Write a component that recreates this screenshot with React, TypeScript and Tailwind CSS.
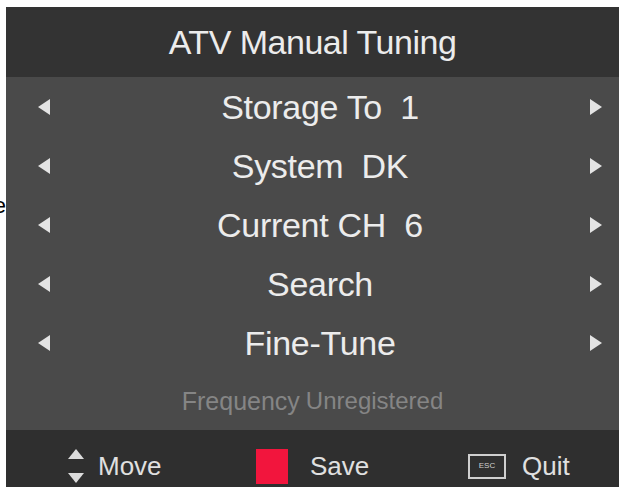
import React from 'react';

const rows = ['Storage To\u00a0 1', 'System\u00a0 DK', 'Current CH\u00a0 6', 'Search', 'Fine-Tune'];

function LeftTri() {
  return (
    <svg width="12" height="16" viewBox="0 0 12 16">
      <polygon points="12,0 12,16 0,8" fill="#e4e4e4" />
    </svg>
  );
}

function RightTri() {
  return (
    <svg width="12" height="16" viewBox="0 0 12 16">
      <polygon points="0,0 0,16 12,8" fill="#e4e4e4" />
    </svg>
  );
}

function UpDown() {
  return (
    <svg width="16" height="38" viewBox="0 0 16 38">
      <polygon points="8,2 16,12 0,12" fill="#dcdcdc" />
      <polygon points="0,26 16,26 8,36" fill="#dcdcdc" />
    </svg>
  );
}

export default function App() {
  return (
    <div
      className="w-[626px] h-[487px] bg-white flex pt-[7px] overflow-hidden"
      style={{ fontFamily: '"Liberation Sans", Arial, sans-serif' }}
    >
      {/* clipped letter from the page beside the screen */}
      <div className="w-[6px] shrink-0 overflow-hidden relative">
        <span className="absolute top-[188px] right-0 text-[22px] text-black leading-none">e</span>
      </div>

      <div className="w-[613px] shrink-0 flex flex-col">
        {/* Title */}
        <div className="h-[70px] shrink-0 bg-[#333333] flex items-center justify-center">
          <span className="text-[34px] tracking-[-0.5px] text-[#ececec] leading-none">ATV Manual Tuning</span>
        </div>

        {/* Menu rows */}
        <div className="h-[353px] shrink-0 bg-[#4a4a4a] flex flex-col">
          {rows.map((r) => (
            <div key={r} className="h-[59px] flex items-center pl-[32px] pr-[17px]">
              <LeftTri />
              <span className="flex-1 text-center text-[34px] tracking-[-0.3px] text-[#ececec] leading-none">{r}</span>
              <RightTri />
            </div>
          ))}
          <div className="h-[58px] flex items-center justify-center">
            <span className="text-[25px] text-[#858585] leading-none">Frequency</span>
            <span className="text-[24px] text-[#858585] leading-none ml-[6px]">Unregistered</span>
          </div>
        </div>

        {/* Footer hints */}
        <div className="h-[70px] shrink-0 bg-[#2f2f2f] pt-[16px] pl-[62px]">
          <div className="h-[40px] flex items-center">
            <div className="w-[188px] flex items-center gap-[14px]">
              <UpDown />
              <span className="text-[26px] text-[#e0e0e0] leading-none">Move</span>
            </div>
            <div className="w-[212px] flex items-center gap-[22px]">
              <div className="w-[32px] h-[35px] bg-[#f2153d]" />
              <span className="text-[26px] text-[#e0e0e0] leading-none">Save</span>
            </div>
            <div className="flex items-center gap-[16px]">
              <div className="w-[38px] h-[25px] border-2 border-[#cfcfcf] flex items-center justify-center">
                <span className="text-[8px] text-[#cfcfcf] leading-none">ESC</span>
              </div>
              <span className="text-[26px] text-[#e0e0e0] leading-none">Quit</span>
            </div>
          </div>
        </div>
      </div>
    </div>
  );
}
